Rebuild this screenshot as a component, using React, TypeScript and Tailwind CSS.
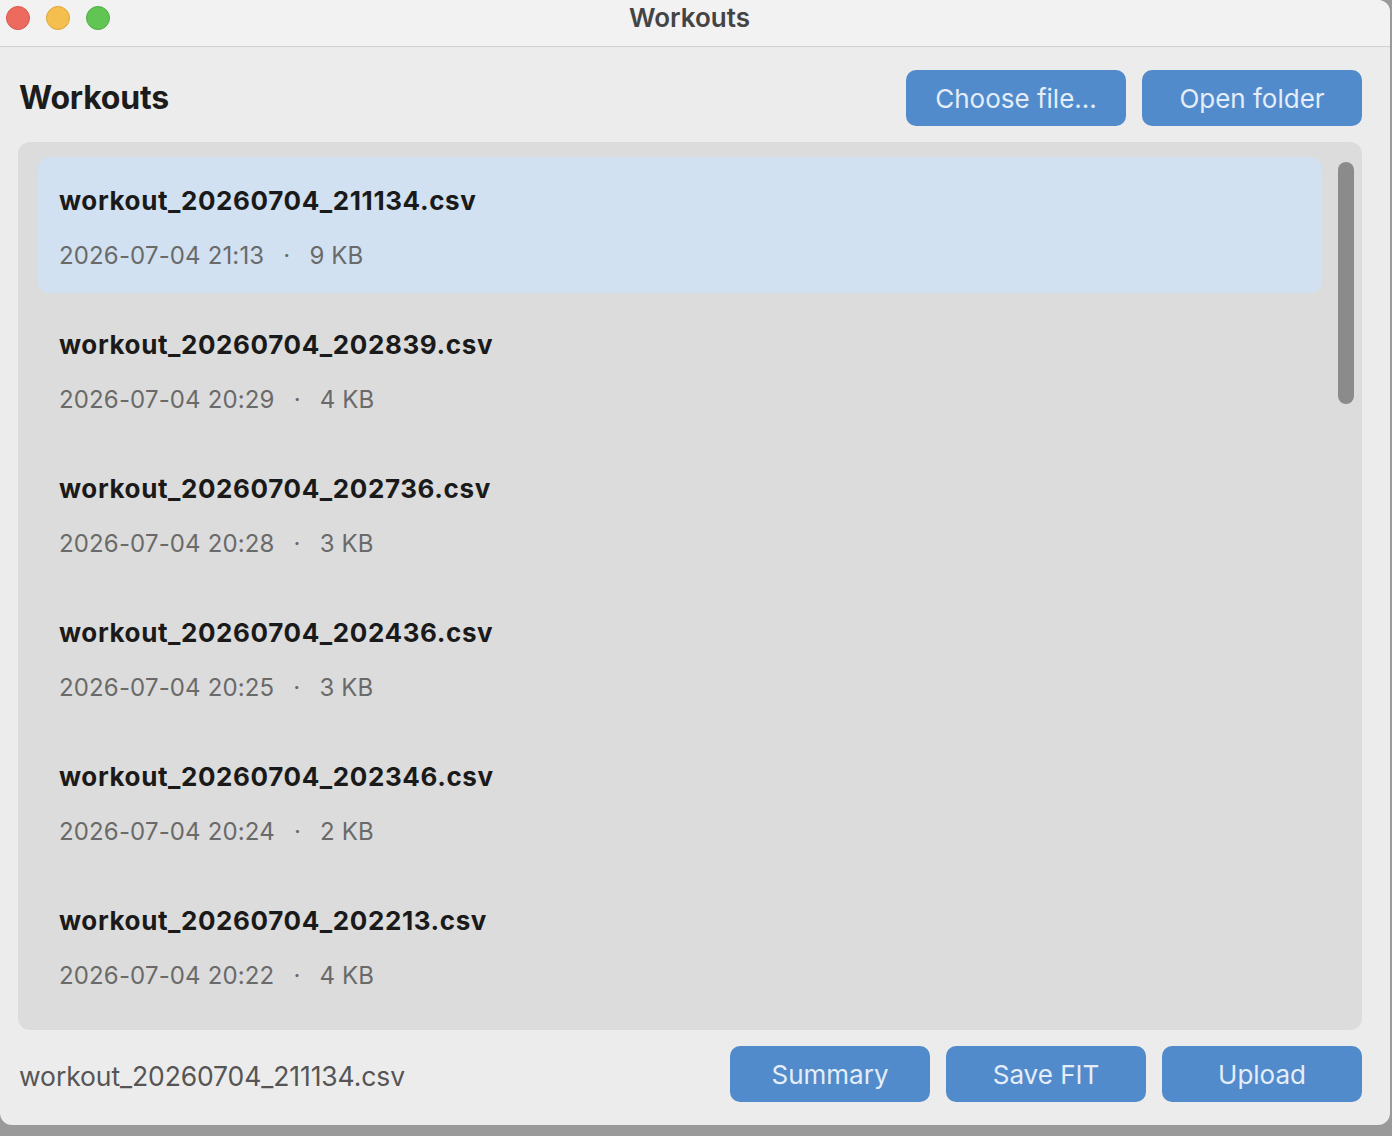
import React from 'react';

const files = [
  { name: 'workout_20260704_211134.csv', date: '2026-07-04 21:13', size: '9 KB' },
  { name: 'workout_20260704_202839.csv', date: '2026-07-04 20:29', size: '4 KB' },
  { name: 'workout_20260704_202736.csv', date: '2026-07-04 20:28', size: '3 KB' },
  { name: 'workout_20260704_202436.csv', date: '2026-07-04 20:25', size: '3 KB' },
  { name: 'workout_20260704_202346.csv', date: '2026-07-04 20:24', size: '2 KB' },
  { name: 'workout_20260704_202213.csv', date: '2026-07-04 20:22', size: '4 KB' },
];

function ActionButton({ label, width }: { label: string; width: string }) {
  return (
    <button
      className={`${width} h-[56px] rounded-[10px] bg-[#518bcb] text-[#e4edf8] text-[26px] flex items-center justify-center`}
    >
      {label}
    </button>
  );
}

export default function App() {
  return (
    <div
      className="w-[1392px] h-[1136px] bg-[#9a9a9a] overflow-hidden"
      style={{ fontFamily: 'Inter, "Noto Sans", sans-serif' }}
    >
      <div className="w-[1390px] h-[1125px] bg-[#ececec] rounded-tr-[12px] rounded-b-[12px] overflow-hidden flex flex-col">
        {/* title bar */}
        <div className="h-[47px] bg-[#f2f2f2] border-b border-[#d2d2d2] flex items-center pb-[10px] relative shrink-0">
          <div className="flex items-center gap-[16px] pl-[6px]">
            <span className="w-[24px] h-[24px] rounded-full bg-[#ed6a5e] border border-[#d9574b]" />
            <span className="w-[24px] h-[24px] rounded-full bg-[#f5bf4f] border border-[#dea53a]" />
            <span className="w-[24px] h-[24px] rounded-full bg-[#61c554] border border-[#4fae43]" />
          </div>
          <div className="absolute inset-0 flex items-center justify-center pb-[12px] pr-[11px] text-[26px] font-semibold text-[#444]">
            Workouts
          </div>
        </div>

        {/* header */}
        <div className="flex items-center justify-between pl-[19px] pr-[28px] pt-[23px] pb-[16px]">
          <h1 className="text-[32px] font-bold text-[#1c1c1c] tracking-[-0.2px]">Workouts</h1>
          <div className="flex gap-[16px]">
            <ActionButton label="Choose file..." width="w-[220px]" />
            <ActionButton label="Open folder" width="w-[220px]" />
          </div>
        </div>

        {/* list */}
        <div className="mx-[18px] mr-[28px] h-[888px] bg-[#dcdcdc] rounded-[12px] flex pl-[20px] pr-[8px] pt-[15px] overflow-hidden shrink-0">
          <div className="flex-1 flex flex-col gap-[8px]">
            {files.map((f, i) => (
              <div
                key={f.name}
                className={`h-[136px] shrink-0 rounded-[12px] pl-[21px] pt-[26px] flex flex-col ${
                  i === 0 ? 'bg-[#d1e1f1]' : ''
                }`}
              >
                <div className="text-[26px] font-bold text-[#1a1a1a] leading-[36px] tracking-[0.6px]">{f.name}</div>
                <div className="text-[24px] text-[#6a6a6a] leading-[36px] mt-[19px] tracking-[0.15px] flex">
                  <span>{f.date}</span>
                  <span className="mx-[19px]">·</span>
                  <span>{f.size}</span>
                </div>
              </div>
            ))}
          </div>
          <div className="w-[16px] ml-[16px] pt-[5px]">
            <div className="w-[16px] h-[242px] rounded-full bg-[#8b8b8b]" />
          </div>
        </div>

        {/* footer */}
        <div className="flex items-center justify-between pl-[19px] pr-[28px] pt-[16px]">
          <span className="text-[26.5px] text-[#555] pt-[6px] tracking-[-0.1px]">workout_20260704_211134.csv</span>
          <div className="flex gap-[16px]">
            <ActionButton label="Summary" width="w-[200px]" />
            <ActionButton label="Save FIT" width="w-[200px]" />
            <ActionButton label="Upload" width="w-[200px]" />
          </div>
        </div>
      </div>
    </div>
  );
}
